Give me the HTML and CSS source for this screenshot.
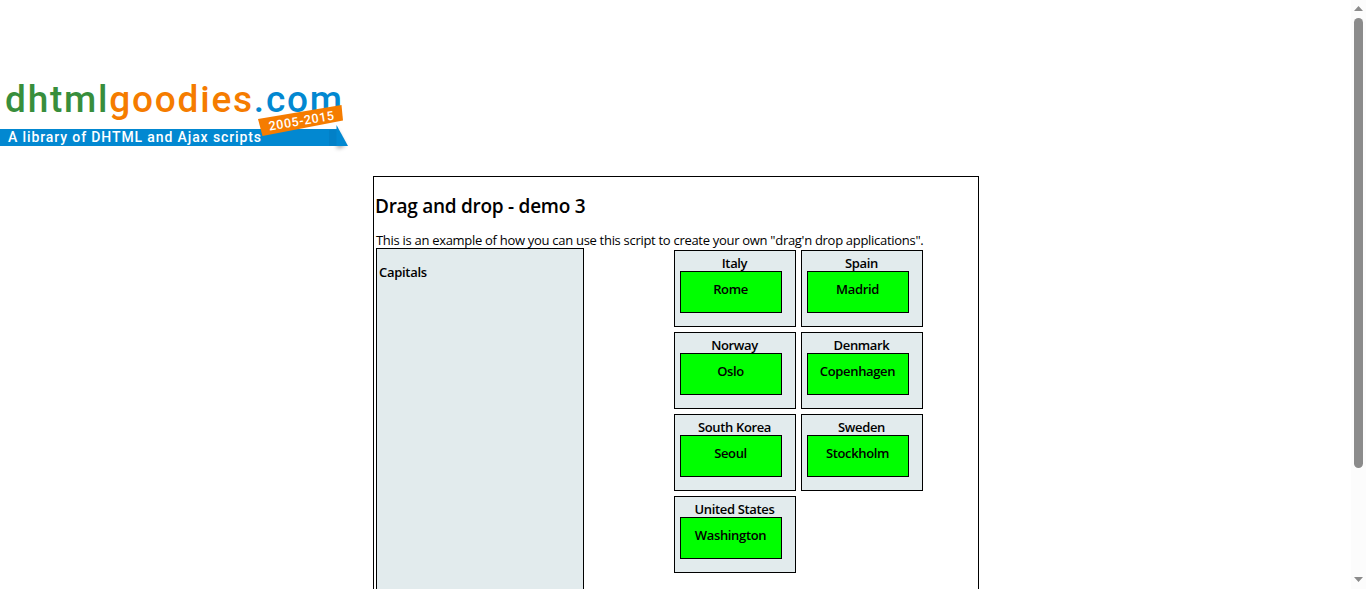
FILE: index.html
```
<!DOCTYPE html>
<html lang="en">
<head>
<meta charset="utf-8">
<title>Drag and drop - demo 3</title>
<link rel="stylesheet" href="styles.css">
</head>
<body>
<div class="page">
  <header class="header">
    <svg class="logo" width="360" height="90" viewBox="0 70 360 90" role="img" aria-label="dhtmlgoodies.com">
      <defs>
        <filter id="soft" x="-50%" y="-50%" width="200%" height="200%"><feGaussianBlur stdDeviation="2"/></filter>
      </defs>
      <text class="logo-name" x="5" y="111.500" textLength="337"><tspan fill="#388e3c">dhtml</tspan><tspan fill="#f57c00">goodies</tspan><tspan fill="#0288d1">.com</tspan></text>
      <path d="M337 129L345 146L337 149Z" fill="#000" opacity=".35" filter="url(#soft)"/>
      <path d="M0 129H337V146H0Z" fill="#0288d1"/>
      <path d="M329 130H337V146H329Z" fill="#0277bd" opacity=".5"/>
      <path d="M336.500 125L348 146H336.500Z" fill="#0288d1"/>
      <text class="logo-tag" x="8" y="142" textLength="253">A library of DHTML and Ajax scripts</text>
      <path d="M258 119L341.500 105L343 120.500L262.500 136Z" fill="#f57c00"/>
      <text class="logo-years" x="269.500" y="130.500" textLength="66" transform="rotate(-9.500 269.500 130.500)">2005-2015</text>
    </svg>
  </header>
  <main class="main">
    <h2 class="title">Drag and drop - demo 3</h2>
    <p class="intro">This is an example of how you can use this script to create your own "drag'n drop applications".</p>
    <div class="columns">
      <section class="capitals"><p class="capitals-title">Capitals</p></section>
      <section class="countries">
        <div class="country"><div class="name">Italy</div><div class="city">Rome</div></div>
        <div class="country"><div class="name">Spain</div><div class="city">Madrid</div></div>
        <div class="country"><div class="name">Norway</div><div class="city">Oslo</div></div>
        <div class="country"><div class="name">Denmark</div><div class="city">Copenhagen</div></div>
        <div class="country"><div class="name">South Korea</div><div class="city">Seoul</div></div>
        <div class="country"><div class="name">Sweden</div><div class="city">Stockholm</div></div>
        <div class="country"><div class="name">United States</div><div class="city">Washington</div></div>
      </section>
    </div>
  </main>
</div>
<div class="scrollbar">
  <svg width="15" height="589" viewBox="0 0 15 589"><path d="M7.500 6L12 11H3Z M3 577H12L7.500 582Z" fill="#8b8b8b"/><rect x="3" y="18" width="9" height="450" rx="4.500" fill="#8b8b8b"/></svg>
</div>
</body>
</html>
```
FILE: styles.css
```
* { box-sizing: border-box; }
body {
  margin: 0;
  height: 589px;
  overflow: hidden;
  display: flex;
  background: #fff;
  color: #000;
  font-family: "Trebuchet MS", "Open Sans", sans-serif;
  font-size: 13px;
}
.page { flex: 1; height: 589px; overflow: hidden; }
.header { height: 176px; padding-top: 70px; }
.logo { display: block; font-family: Roboto, sans-serif; }
.logo-name { font-size: 37px; font-weight: 500; }
.logo-tag { font-size: 14px; font-weight: 500; fill: #fff; }
.logo-years { font-size: 12.5px; font-weight: 500; fill: #fff; }
.main {
  width: 606px;
  height: 413px;
  margin-left: 373px;
  padding: 0 2px;
  border: 1px solid #000;
  border-bottom: 0;
}
.title {
  margin: 16px 0 0;
  font-size: 19px;
  font-weight: 600;
  line-height: 26px;
  letter-spacing: -0.27px;
  text-indent: -1px;
  white-space: nowrap;
}
.intro {
  margin: 13px 0 0;
  line-height: 16px;
  letter-spacing: -0.295px;
  white-space: nowrap;
}
.columns { display: flex; gap: 90px; align-items: flex-start; }
.capitals {
  width: 208px;
  height: 341px;
  padding: 15px 2px;
  border: 1px solid #000;
  border-bottom: 0;
  background: #e2ebed;
}
.capitals-title { margin: 0; font-weight: 600; line-height: 16px; letter-spacing: -0.3px; }
.countries {
  display: grid;
  grid-template-columns: 122px 122px;
  gap: 5px;
  padding-top: 2px;
}
.country {
  height: 77px;
  padding: 4px 5px;
  border: 1px solid #000;
  background: #e2ebed;
  font-weight: 600;
  text-align: center;
  line-height: 16px;
  letter-spacing: -0.35px;
}
.name { padding-right: 1px; }
.city {
  width: 102px;
  height: 42px;
  padding: 9px 1px 0 0;
  border: 1px solid #000;
  background: #0f0;
}
.scrollbar { width: 15px; background: #fcfcfc; }
.scrollbar svg { display: block; }
```
